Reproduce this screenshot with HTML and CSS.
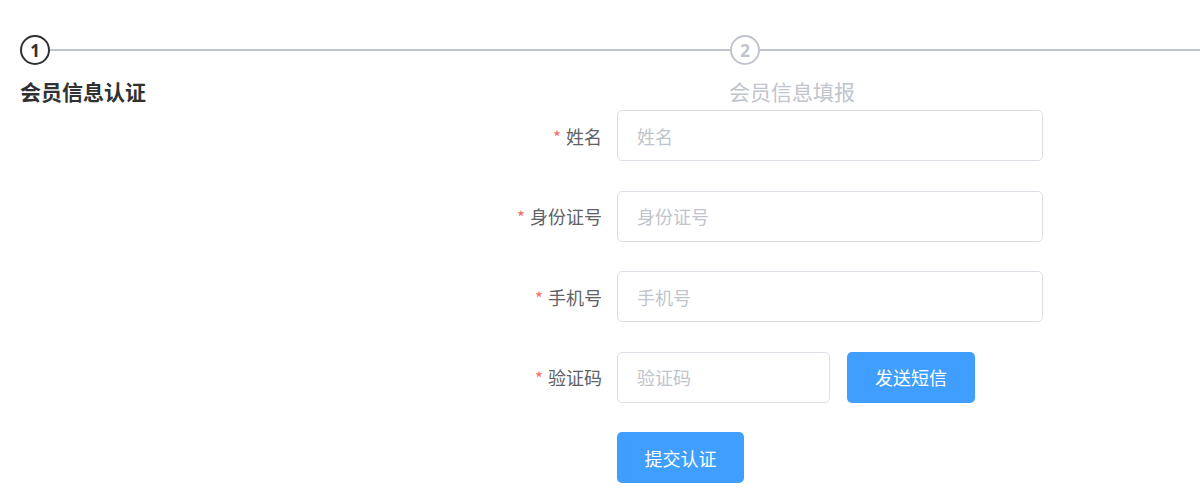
FILE: index.html
```html
<!DOCTYPE html>
<html lang="zh-CN">
<head>
<meta charset="utf-8">
<title>会员信息认证</title>
<link rel="stylesheet" href="styles.css">
</head>
<body>
<div class="steps">
  <div class="step step-first is-process">
    <div class="step-head">
      <div class="step-icon">1</div>
      <div class="step-line"></div>
    </div>
    <div class="step-title">会员信息认证</div>
  </div>
  <div class="step step-last is-wait">
    <div class="step-head">
      <div class="step-icon">2</div>
      <div class="step-line"></div>
    </div>
    <div class="step-title">会员信息填报</div>
  </div>
</div>

<form class="form">
  <div class="form-item">
    <label class="form-label"><span class="req">*</span>姓名</label>
    <div class="form-content"><input class="input" type="text" placeholder="姓名"></div>
  </div>
  <div class="form-item">
    <label class="form-label"><span class="req">*</span>身份证号</label>
    <div class="form-content"><input class="input" type="text" placeholder="身份证号"></div>
  </div>
  <div class="form-item">
    <label class="form-label"><span class="req">*</span>手机号</label>
    <div class="form-content"><input class="input" type="text" placeholder="手机号"></div>
  </div>
  <div class="form-item">
    <label class="form-label"><span class="req">*</span>验证码</label>
    <div class="form-content code-row">
      <input class="input input-code" type="text" placeholder="验证码">
      <button class="btn btn-send" type="button">发送短信</button>
    </div>
  </div>
  <div class="form-item">
    <div class="form-label"></div>
    <div class="form-content">
      <button class="btn btn-submit" type="button">提交认证</button>
    </div>
  </div>
</form>
</body>
</html>
```

FILE: styles.css
```css
html, body {
  margin: 0;
  padding: 0;
  background: #fff;
}
body {
  font-family: "Noto Sans CJK SC", "Noto Sans", "Liberation Sans", sans-serif;
  color: #606266;
  width: 1200px;
  height: 503px;
  overflow: hidden;
}

.steps {
  display: flex;
  padding: 35px 0 0 20px;
}
.step-first {
  width: 710px;
  flex: none;
}
.step-last {
  flex: 1;
}
.step-head {
  display: flex;
  align-items: center;
  height: 30px;
}
.step-icon {
  box-sizing: border-box;
  width: 30px;
  height: 30px;
  border-radius: 50%;
  border: 2.5px solid #303133;
  display: flex;
  align-items: center;
  justify-content: center;
  font-family: "Open Sans", "Liberation Sans", sans-serif;
  font-weight: 700;
  font-size: 17px;
  color: #303133;
  background: #fff;
  flex: none;
}
.step-line {
  flex: 1;
  height: 2px;
  background: #c0c4cc;
}
.is-wait .step-icon {
  border-color: #c0c4cc;
  color: #c0c4cc;
}
.step-title {
  padding-top: 6px;
  line-height: 40px;
  height: 39px;
  font-size: 21px;
  white-space: nowrap;
}
.is-process .step-title {
  font-weight: 700;
  color: #303133;
}
.is-wait .step-title {
  color: #c0c4cc;
  margin-left: -1px;
}

.form {
  margin: 0 0 0 457px;
  width: 586px;
}
.form-item {
  display: flex;
  align-items: center;
  height: 51px;
  margin-bottom: 29.5px;
}
.form-label {
  box-sizing: border-box;
  width: 160px;
  padding-right: 15px;
  text-align: right;
  font-size: 18px;
  color: #606266;
  flex: none;
}
.req {
  color: #f56c6c;
  margin-right: 5px;
  font-size: 17px;
}
.form-content {
  flex: 1;
  display: flex;
  align-items: center;
  height: 51px;
}
.input {
  box-sizing: border-box;
  width: 100%;
  height: 51px;
  border: 1px solid #dcdfe6;
  border-radius: 5px;
  padding: 0 19px;
  font-family: inherit;
  font-size: 18px;
  color: #606266;
  outline: none;
  background: #fff;
}
.input::placeholder {
  color: #c0c4cc;
}
.code-row {
  gap: 17px;
}
.input-code {
  width: 213px;
  flex: none;
}
.btn {
  box-sizing: border-box;
  height: 51px;
  border: none;
  border-radius: 5px;
  background: #409eff;
  color: #fff;
  font-family: inherit;
  font-size: 18px;
  padding: 0;
  cursor: pointer;
}
.btn-send {
  width: 128px;
}
.btn-submit {
  width: 127px;
}
```
